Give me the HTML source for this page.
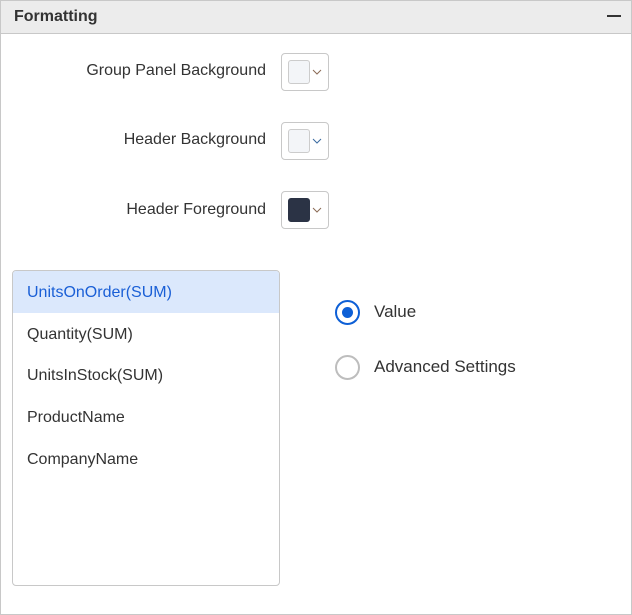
<!DOCTYPE html>
<html><head><style>
*{box-sizing:border-box;margin:0;padding:0}
body{width:632px;height:615px;background:#fff;font-family:"Liberation Sans",Roboto,sans-serif;position:relative;overflow:hidden;color:#333}
.frame{position:absolute;left:0;top:0;width:632px;height:615px;border:1px solid #c8c8c8}
.hdr{position:absolute;left:1px;top:1px;width:630px;height:33px;background:#ececec;border-bottom:1px solid #c8c8c8}
.hdr .t{position:absolute;left:13px;top:7px;font-size:16px;font-weight:bold;color:#333}
.hdr .m{position:absolute;left:606px;top:14px;width:14px;height:1.5px;background:#333}
.lbl{position:absolute;right:366px;font-size:16px;color:#333;white-space:nowrap}
.cp{position:absolute;left:281px;width:48px;height:38px;border:1px solid #c8c8c8;border-radius:4px}
.cp .sw{position:absolute;left:6px;top:6px;width:22px;height:24px;border:1px solid #ccc;border-radius:3px;background:#f3f5f8}
.cp svg{position:absolute;left:30px;top:14px}
.list{position:absolute;left:12px;top:270px;width:268px;height:316px;border:1px solid #c8c8c8;border-radius:4px;overflow:hidden}
.it{position:absolute;left:0;width:266px;height:42px;padding-left:14px;line-height:44px;font-size:16px;color:#333}
.sel{background:#dbe8fc;color:#1a5fd6}
.rad{position:absolute;left:335px;width:25px;height:25px;border-radius:50%;border:2px solid #bdbdbd}
.rad.on{border-color:#0d5fd6}
.rad.on::after{content:"";position:absolute;left:5px;top:5px;width:11px;height:11px;border-radius:50%;background:#0d5fd6}
.rt{position:absolute;left:374px;font-size:17px;color:#333}
</style></head><body>
<div class="frame"></div>
<div class="hdr"><div class="t">Formatting</div><div class="m"></div></div>

<div class="lbl" style="top:62px">Group Panel Background</div>
<div class="cp" style="top:53px"><div class="sw"></div><svg width="10" height="8"><path d="M1 2 L5 6 L9 2" fill="none" stroke="#8a6a55" stroke-width="1"/></svg></div>
<div class="lbl" style="top:131px">Header Background</div>
<div class="cp" style="top:122px"><div class="sw"></div><svg width="10" height="8"><path d="M1 2 L5 6 L9 2" fill="none" stroke="#3a6aa0" stroke-width="1"/></svg></div>
<div class="lbl" style="top:201px">Header Foreground</div>
<div class="cp" style="top:191px"><div class="sw" style="background:#2b3345;border-color:#2b3345"></div><svg width="10" height="8"><path d="M1 2 L5 6 L9 2" fill="none" stroke="#8a6a55" stroke-width="1"/></svg></div>

<div class="list">
<div class="it sel" style="top:0">UnitsOnOrder(SUM)</div>
<div class="it" style="top:42px">Quantity(SUM)</div>
<div class="it" style="top:83px">UnitsInStock(SUM)</div>
<div class="it" style="top:125px">ProductName</div>
<div class="it" style="top:167px">CompanyName</div>
</div>

<div class="rad on" style="top:300px"></div>
<div class="rt" style="top:302px">Value</div>
<div class="rad" style="top:355px"></div>
<div class="rt" style="top:357px">Advanced Settings</div>
</body></html>
